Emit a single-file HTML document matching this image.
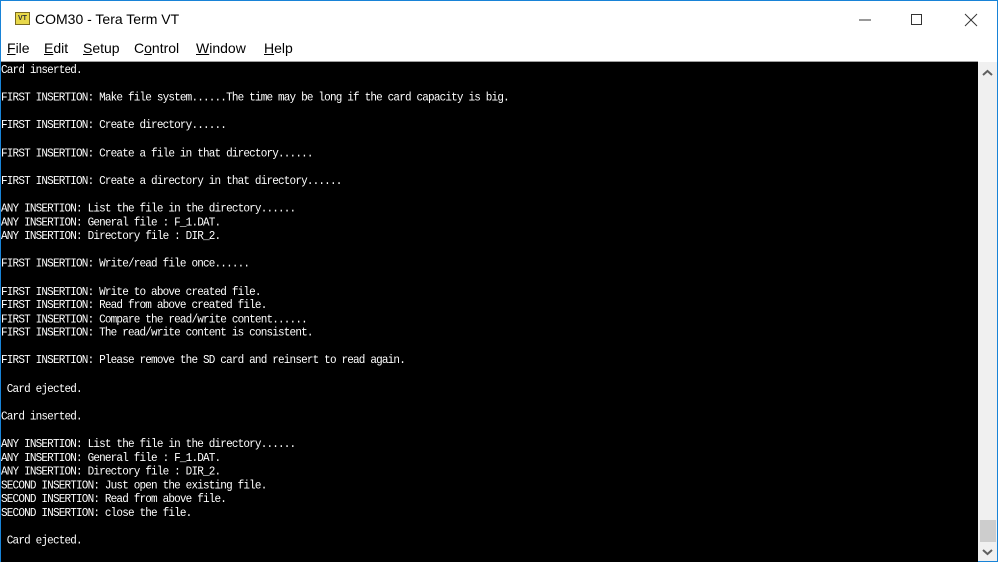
<!DOCTYPE html>
<html><head><style>
html,body{margin:0;padding:0;width:998px;height:562px;overflow:hidden;background:#fff;}
#win{position:absolute;left:0;top:0;width:996px;height:560px;border:1px solid #1883d7;background:#fff;}
#title{position:absolute;left:0;top:0;width:996px;height:36px;background:#fff;font-family:"Liberation Sans",sans-serif;font-size:14px;}
#title .t{position:absolute;left:34px;top:10px;color:#000;}
#icon{position:absolute;left:14px;top:11px;width:13px;height:11px;background:#e8d84a;border:1px solid #7a6a20;font-size:7px;font-weight:bold;line-height:11px;text-align:center;color:#333;}
#menu{position:absolute;left:0;top:36px;height:24px;width:996px;font-family:"Liberation Sans",sans-serif;font-size:14px;}
#menu span{position:absolute;top:3px;}
#term{position:absolute;left:0;top:60px;width:977px;height:500px;background:#000;border-top:1px solid #a0a0a0;}
pre{margin:0;position:absolute;left:0;top:2px;color:#fff;font-family:"Liberation Mono",monospace;font-size:11px;letter-spacing:-0.83px;line-height:13.85px;transform:scaleY(1.1);transform-origin:0 0;}
#sb{position:absolute;left:977px;top:61px;width:19px;height:499px;background:#f0f0f0;}
#thumb{position:absolute;left:2px;top:458px;width:16px;height:22px;background:#cdcdcd;}
</style></head><body>
<div id="win">
<div id="title"><div id="icon">VT</div><span class="t">COM30 - Tera Term VT</span>
<svg style="position:absolute;left:850px;top:12px" width="140" height="14">
<line x1="8" y1="7" x2="20" y2="7" stroke="#333" stroke-width="1"/>
<rect x="60.5" y="1.5" width="10" height="10" fill="none" stroke="#333"/>
<line x1="114" y1="1" x2="126" y2="13" stroke="#333"/><line x1="126" y1="1" x2="114" y2="13" stroke="#333"/>
</svg></div>
<div id="menu">
<span style="left:6px"><u>F</u>ile</span><span style="left:43px"><u>E</u>dit</span><span style="left:82px"><u>S</u>etup</span><span style="left:133px">C<u>o</u>ntrol</span><span style="left:195px"><u>W</u>indow</span><span style="left:263px"><u>H</u>elp</span>
</div>
<div id="term"><pre style="line-height:12.59px">Card inserted.

FIRST INSERTION: Make file system......The time may be long if the card capacity is big.

FIRST INSERTION: Create directory......

FIRST INSERTION: Create a file in that directory......

FIRST INSERTION: Create a directory in that directory......

ANY INSERTION: List the file in the directory......
ANY INSERTION: General file : F_1.DAT.
ANY INSERTION: Directory file : DIR_2.

FIRST INSERTION: Write/read file once......

FIRST INSERTION: Write to above created file.
FIRST INSERTION: Read from above created file.
FIRST INSERTION: Compare the read/write content......
FIRST INSERTION: The read/write content is consistent.

FIRST INSERTION: Please remove the SD card and reinsert to read again.

 Card ejected.

Card inserted.

ANY INSERTION: List the file in the directory......
ANY INSERTION: General file : F_1.DAT.
ANY INSERTION: Directory file : DIR_2.
SECOND INSERTION: Just open the existing file.
SECOND INSERTION: Read from above file.
SECOND INSERTION: close the file.

 Card ejected.</pre></div>
<div id="sb">
<svg style="position:absolute;left:4px;top:7px" width="11" height="8"><polyline points="1,6 5.5,2 10,6" fill="none" stroke="#606060" stroke-width="2"/></svg>
<div id="thumb"></div>
<svg style="position:absolute;left:4px;top:486px" width="11" height="8"><polyline points="1,2 5.5,6 10,2" fill="none" stroke="#606060" stroke-width="2"/></svg>
</div>
</div>
</body></html>
